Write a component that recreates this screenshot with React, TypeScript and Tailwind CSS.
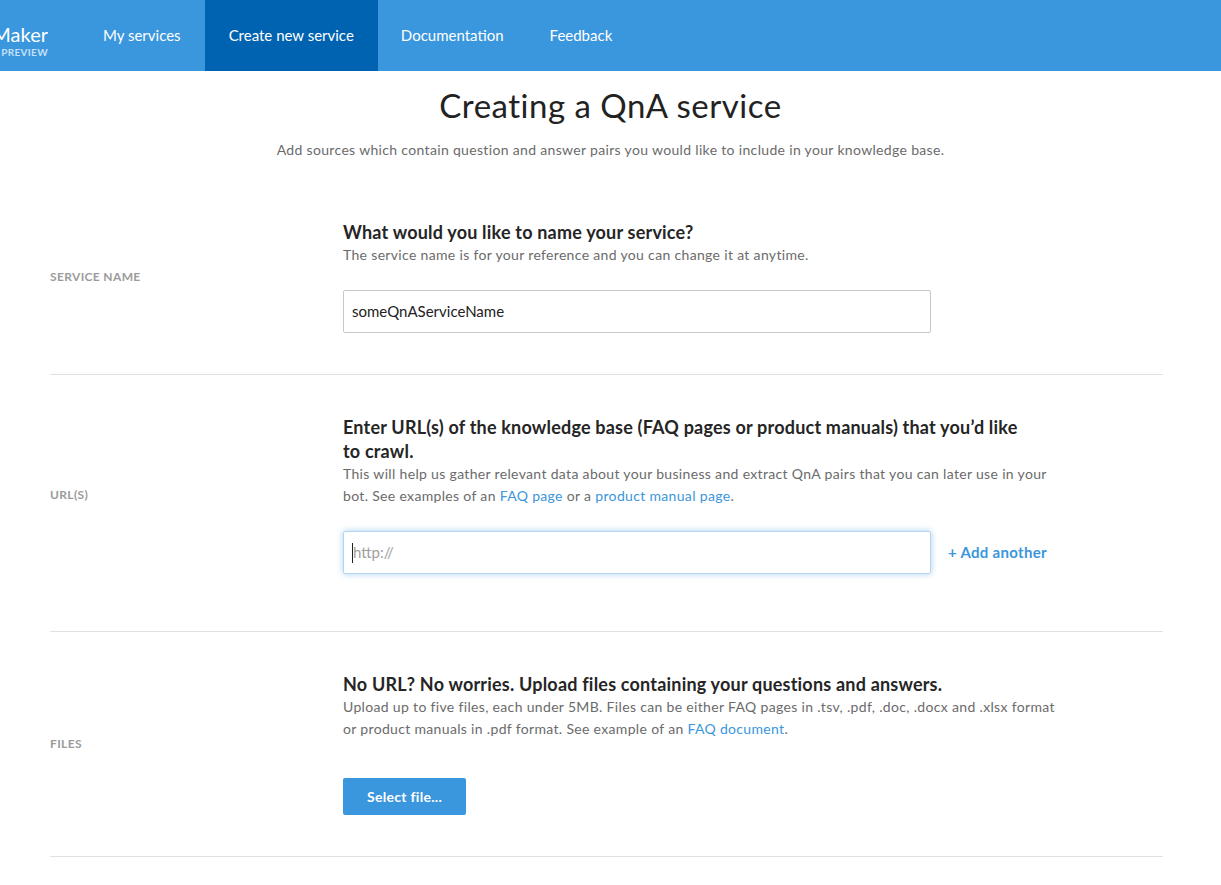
import React from "react";

const font = "font-['Lato','Open_Sans','Liberation_Sans',sans-serif]";

function Section({
  label,
  children,
  pb,
}: {
  label: string;
  children: React.ReactNode;
  pb: string;
}) {
  return (
    <div className={`grid grid-cols-[293px_1fr] border-b border-[#e1e1e1] pt-10 ${pb}`}>
      <div className="self-center text-[12px] font-bold uppercase tracking-[0.35px] text-[#9b9b9b]">{label}</div>
      <div>{children}</div>
    </div>
  );
}

export default function App() {
  return (
    <div className={`min-h-screen bg-white ${font}`}>
      <header className="flex h-[71px] items-stretch bg-[#3a96dd] text-white">
        <div className="flex w-[48px] flex-col items-end justify-center overflow-hidden pt-[8px]">
          <div className="whitespace-nowrap text-[20px] leading-[24px]">QnA Maker</div>
          <div className="whitespace-nowrap text-[10px] font-bold leading-[12px] tracking-[0.3px] text-[#c5e1f7]">PREVIEW</div>
        </div>
        <nav className="ml-[31px] flex items-stretch text-[15px]">
          <a className="flex items-center px-6">My services</a>
          <a className="flex items-center bg-[#0063b1] px-6">Create new service</a>
          <a className="flex items-center px-[23px]">Documentation</a>
          <a className="flex items-center px-[23px]">Feedback</a>
        </nav>
      </header>

      <main>
        <div className="pt-[14px] text-center">
          <h1 className="text-[33px] leading-[40px] tracking-[0.5px] text-[#222]">Creating a QnA service</h1>
          <p className="mt-[15px] text-[14px] leading-5 tracking-[0.33px] text-[#6b6b6b]">
            Add sources which contain question and answer pairs you would like to include in your knowledge base.
          </p>
        </div>

        <div className="ml-[50px] mt-[20px] w-[1113px]">
          <Section label="Service name" pb="pb-[41px]">
            <h2 className="text-[18px] font-bold leading-[24px] tracking-[0.2px] text-[#252525]">What would you like to name your service?</h2>
            <p className="text-[14px] leading-[22px] tracking-[0.33px] text-[#6b6b6b]">
              The service name is for your reference and you can change it at anytime.
            </p>
            <div className="mt-6 flex h-[43px] w-[588px] items-center rounded-[2px] border border-[#c8c8c8] px-2 text-[15px] text-[#222]">
              someQnAServiceName
            </div>
          </Section>

          <Section label="URL(s)" pb="pb-[57px]">
            <h2 className="whitespace-nowrap text-[18px] font-bold leading-[24px] tracking-[0.2px] text-[#252525]">
              Enter URL(s) of the knowledge base (FAQ pages or product manuals) that you’d like
              <br />
              to crawl.
            </h2>
            <p className="whitespace-nowrap text-[14px] leading-[22px] tracking-[0.33px] text-[#6b6b6b]">
              This will help us gather relevant data about your business and extract QnA pairs that you can later use in your
              <br />
              bot. See examples of an <a className="text-[#3a96dd]">FAQ page</a> or a{" "}
              <a className="text-[#3a96dd]">product manual page</a>.
            </p>
            <div className="mt-6 flex items-center">
              <div className="relative flex h-[43px] w-[588px] items-center rounded-[2px] border border-[#b6d4ef] px-[9px] text-[15px] text-[#a0a0a0] shadow-[0_0_6px_rgba(58,150,221,0.45)]">
                <span className="absolute left-[8px] top-[11px] h-[20px] w-px bg-[#222]" />
                http://
              </div>
              <a className="ml-[17px] text-[15px] font-bold tracking-[0.3px] text-[#3a96dd]">+ Add another</a>
            </div>
          </Section>

          <Section label="Files" pb="pb-[41px]">
            <h2 className="whitespace-nowrap text-[18px] font-bold leading-[24px] tracking-[0.2px] text-[#252525]">
              No URL? No worries. Upload files containing your questions and answers.
            </h2>
            <p className="whitespace-nowrap text-[14px] leading-[22px] tracking-[0.33px] text-[#6b6b6b]">
              Upload up to five files, each under 5MB. Files can be either FAQ pages in .tsv, .pdf, .doc, .docx and .xlsx format
              <br />
              or product manuals in .pdf format. See example of an <a className="text-[#3a96dd]">FAQ document</a>.
            </p>
            <button className="mt-[38px] flex h-[37px] w-[123px] items-center justify-center rounded-[2px] bg-[#3a96dd] text-[14px] font-bold tracking-[0.3px] text-white">
              Select file...
            </button>
          </Section>
        </div>
      </main>
    </div>
  );
}
